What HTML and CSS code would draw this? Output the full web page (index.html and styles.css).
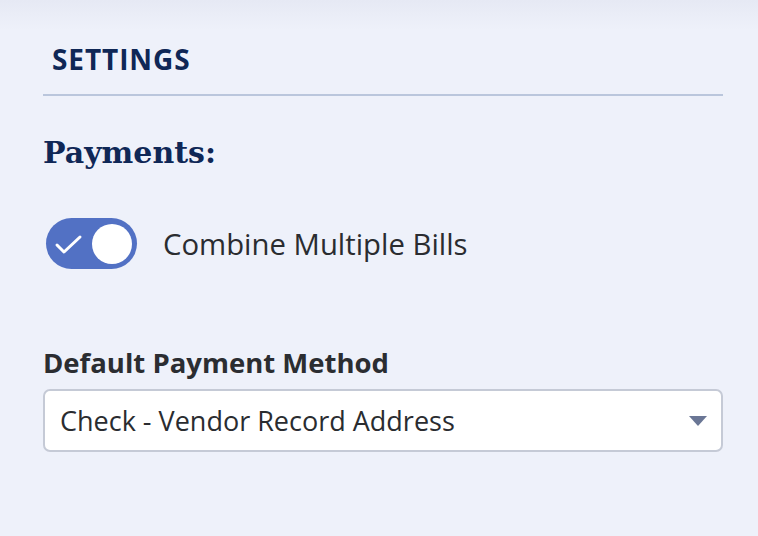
FILE: index.html
```html
<!DOCTYPE html>
<html>
<head>
<meta charset="utf-8">
<link rel="stylesheet" href="styles.css">
</head>
<body>
<div class="panel">
  <div class="header">
    <h2 class="title">SETTINGS</h2>
  </div>
  <h3 class="section">Payments:</h3>
  <div class="toggle-row">
    <div class="toggle">
      <svg class="check" width="29" height="22" viewBox="0 0 29 22"><path d="M3 12 L10 19 L26 4" fill="none" stroke="#fff" stroke-width="3" stroke-linecap="round" stroke-linejoin="round"/></svg>
      <span class="knob"></span>
    </div>
    <span class="toggle-label">Combine Multiple Bills</span>
  </div>
  <label class="field-label">Default Payment Method</label>
  <div class="select">
    <span class="select-value">Check - Vendor Record Address</span>
    <span class="caret"></span>
  </div>
</div>
</body>
</html>
```
FILE: styles.css
```css
html, body {
  margin: 0;
  padding: 0;
}
body {
  width: 758px;
  height: 536px;
  background: linear-gradient(to bottom, #e6e9f4 0px, #eef1fa 30px, #eef1fa 100%);
  font-family: "Open Sans", "Noto Sans", sans-serif;
  overflow: hidden;
}
.panel {
  padding: 0 35px 0 43px;
}
.header {
  padding-top: 40px;
  border-bottom: 2px solid #bac6dc;
  padding-left: 9px;
  padding-bottom: 16px;
}
.title {
  margin: 0;
  font-size: 28px;
  line-height: 38px;
  font-weight: 700;
  letter-spacing: 0.9px;
  color: #0f2756;
}
.section {
  margin: 37px 0 0 0;
  font-family: "DejaVu Serif", serif;
  font-size: 30px;
  line-height: 40px;
  font-weight: 700;
  color: #0f2756;
}
.toggle-row {
  display: flex;
  align-items: center;
  margin-top: 45px;
  padding-left: 3px;
  gap: 26px;
}
.toggle {
  position: relative;
  width: 91px;
  height: 51px;
  border-radius: 26px;
  background: #5271c4;
  display: flex;
  align-items: center;
  justify-content: space-between;
  padding: 0 5px 0 8px;
  box-sizing: border-box;
}
.check {
  display: block;
}
.knob {
  width: 40px;
  height: 40px;
  border-radius: 50%;
  background: #fff;
}
.toggle-label {
  font-size: 29.3px;
  color: #2a2c30;
}
.field-label {
  display: block;
  margin-top: 76px;
  font-size: 27.5px;
  font-weight: 700;
  color: #2b2d31;
  line-height: 36px;
}
.select {
  margin-top: 8px;
  height: 63px;
  box-sizing: border-box;
  border: 2px solid #c5cad6;
  border-radius: 7px;
  background: #fff;
  display: flex;
  align-items: center;
  justify-content: space-between;
  padding: 0 14px 0 15px;
}
.select-value {
  font-size: 27px;
  color: #2a2c30;
}
.caret {
  width: 0;
  height: 0;
  border-left: 9px solid transparent;
  border-right: 9px solid transparent;
  border-top: 10px solid #6a7695;
}
```
